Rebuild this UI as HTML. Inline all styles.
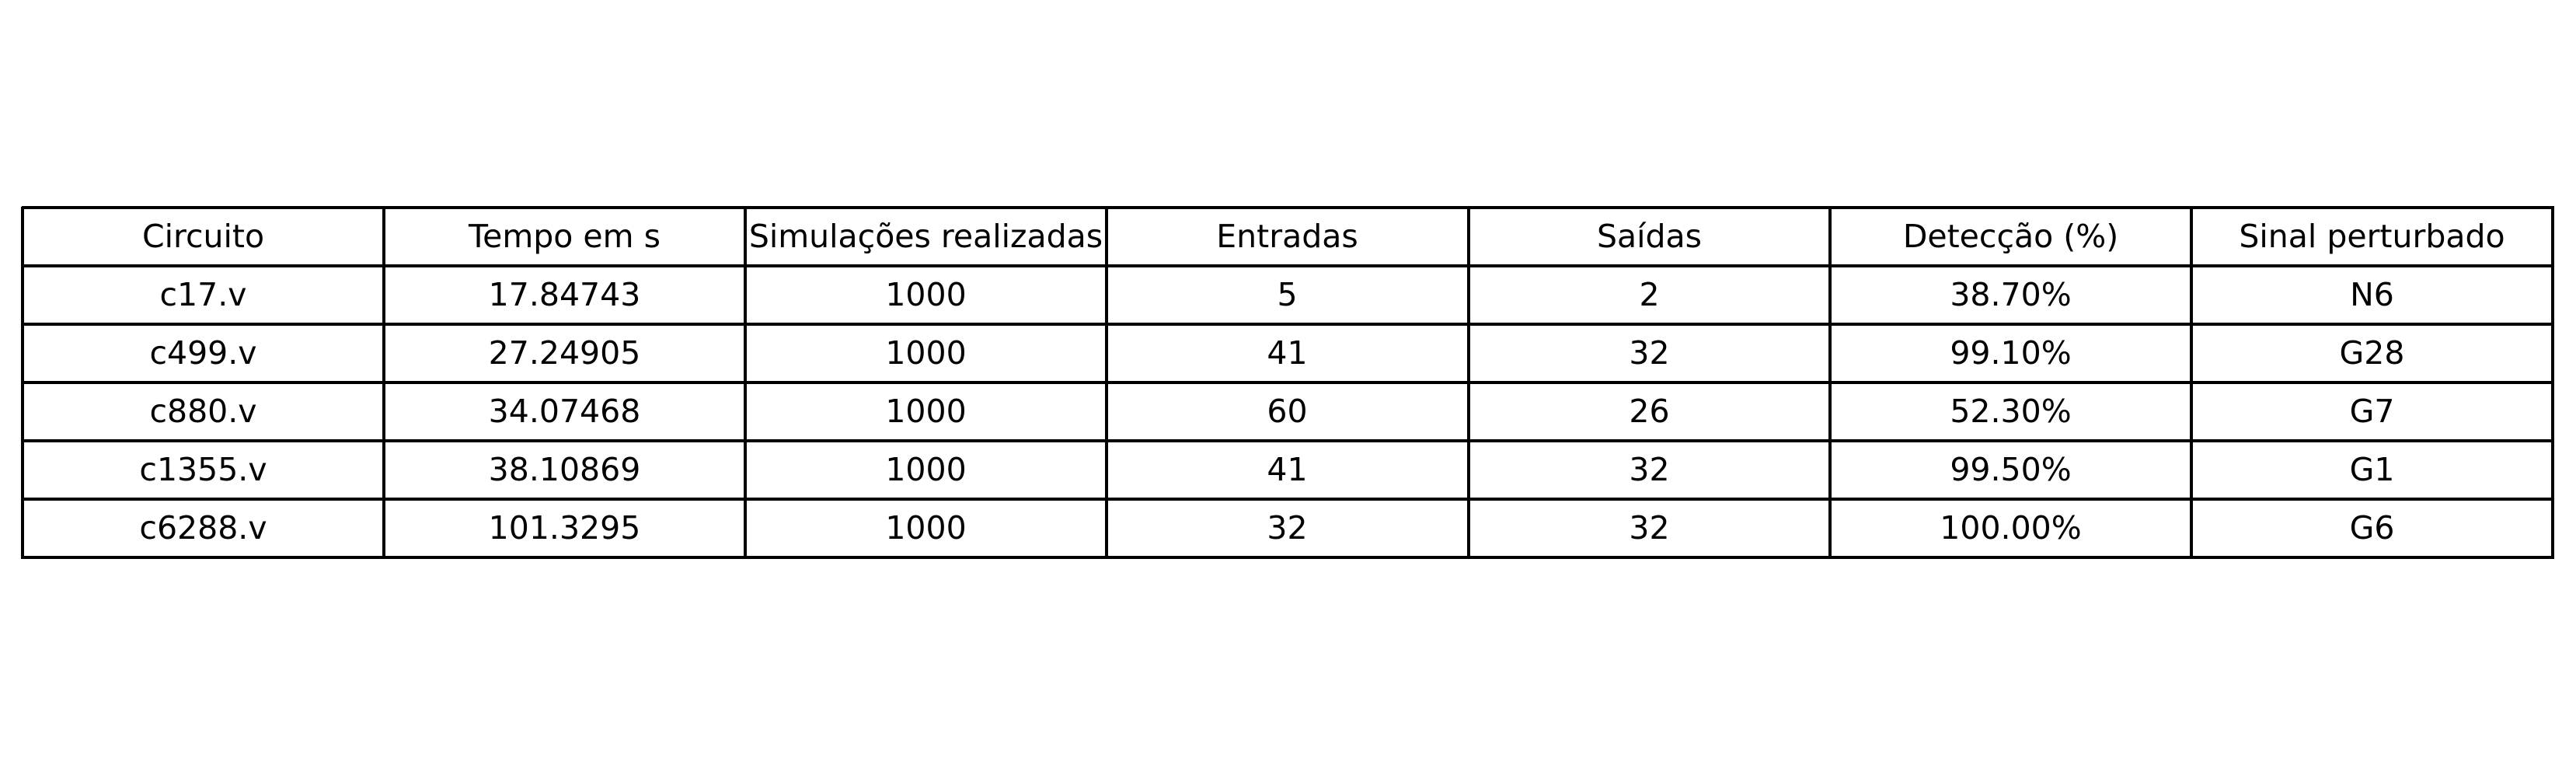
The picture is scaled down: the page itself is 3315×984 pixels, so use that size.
<!DOCTYPE html>
<html><head><meta charset="utf-8"><style>
html,body{margin:0;padding:0;background:#fff;}
body{width:3315px;height:984px;position:relative;overflow:hidden;font-family:"DejaVu Sans","Liberation Sans",sans-serif;font-size:41px;color:#000;}
.h{position:absolute;left:28px;width:3259px;height:4px;background:#000;}
.v{position:absolute;top:266px;height:453px;width:4px;background:#000;}
.c{position:absolute;width:465px;height:75px;line-height:75px;text-align:center;white-space:nowrap;}
</style></head><body>
<div id="t"></div>
<script>
var rows=[["Circuito","Tempo em s","Simulações realizadas","Entradas","Saídas","Detecção (%)","Sinal perturbado"],
["c17.v","17.84743","1000","5","2","38.70%","N6"],
["c499.v","27.24905","1000","41","32","99.10%","G28"],
["c880.v","34.07468","1000","60","26","52.30%","G7"],
["c1355.v","38.10869","1000","41","32","99.50%","G1"],
["c6288.v","101.3295","1000","32","32","100.00%","G6"]];
var h="",x0=29,w=465.14,y0=267,rh=75;
for(var r=0;r<=6;r++)h+='<div class="h" style="top:'+(y0+r*rh-2)+'px"></div>';
for(var c=0;c<=7;c++)h+='<div class="v" style="left:'+Math.round(x0+c*w-2)+'px"></div>';
for(var r=0;r<6;r++)for(var c=0;c<7;c++)h+='<div class="c" style="left:'+Math.round(x0+c*w)+'px;top:'+(y0+r*rh)+'px">'+rows[r][c]+'</div>';
document.getElementById("t").innerHTML=h;
</script>
</body></html>
